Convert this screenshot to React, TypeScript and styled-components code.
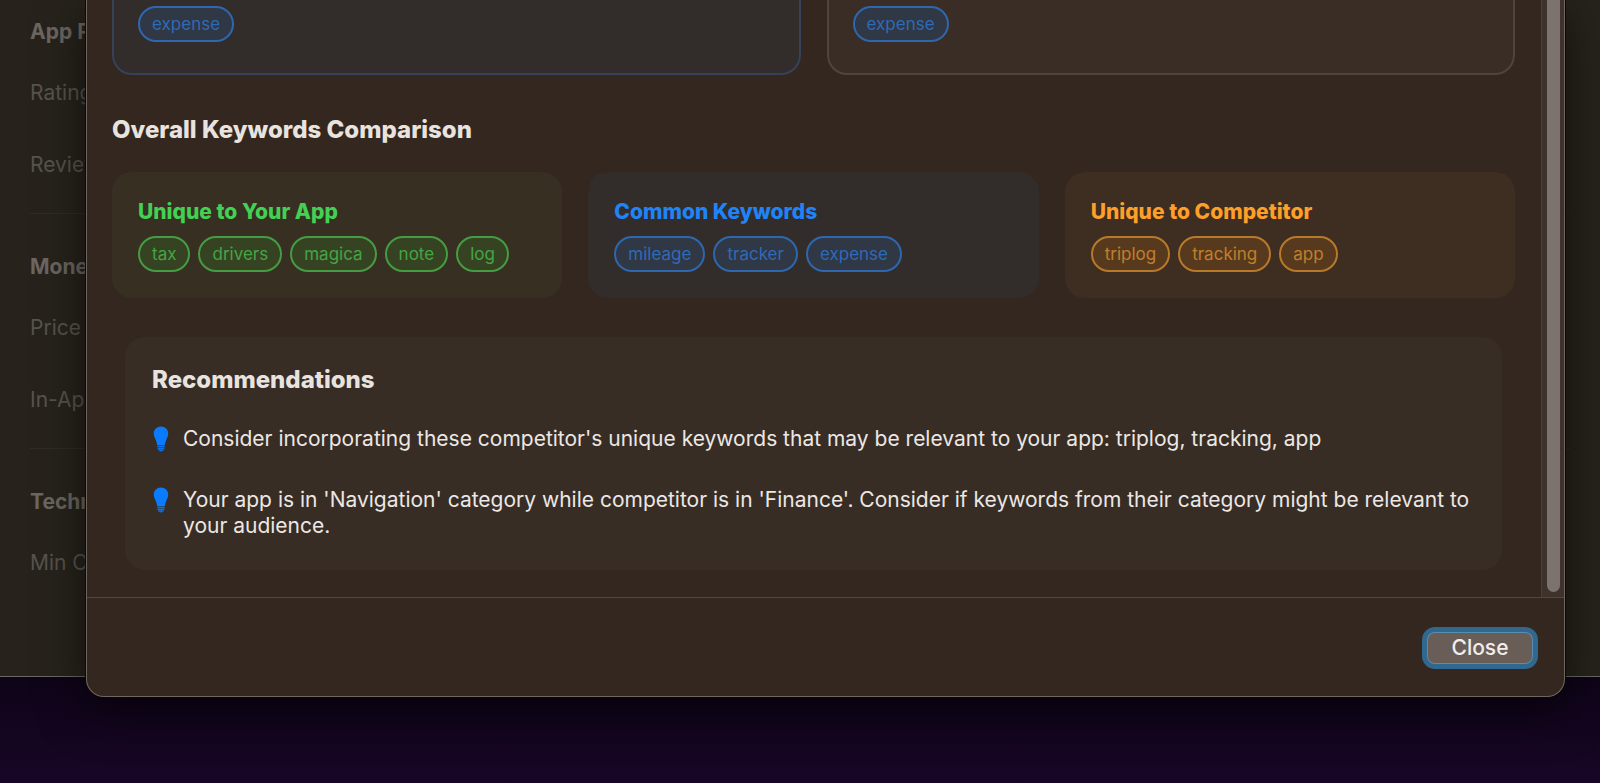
import React from "react";
import styled, { createGlobalStyle } from "styled-components";

const GlobalStyle = createGlobalStyle`
  *, *::before, *::after { box-sizing: border-box; }
  body {
    margin: 0;
    background: #170622;
    font-family: Inter, "Liberation Sans", sans-serif;
    -webkit-font-smoothing: antialiased;
  }
  h2, h3, p, ul { margin: 0; padding: 0; }
  ul { list-style: none; }
`;

type Tone = "green" | "blue" | "orange";

const tones: Record<Tone, { title: string; card: string; chip: string; line: string; text: string }> = {
  green: { title: "#43d153", card: "#382f23", chip: "#364323", line: "#459c42", text: "#44a543" },
  blue: { title: "#1f84f8", card: "#322d2a", chip: "#303745", line: "#2f67ae", text: "#2d6bb8" },
  orange: { title: "#fd9f28", card: "#3e2d21", chip: "#573a1d", line: "#b8792a", text: "#c17f2b" },
};

const Page = styled.div`
  position: relative;
  min-height: 100vh;
  overflow: hidden;
  background: linear-gradient(#0e0418 676px, #180626 783px);
`;

const BackWindow = styled.main`
  padding: 16px 30px 97px;
  background: #27231c;
  border-bottom: 1px solid #6b6865;
`;

const BackGroup = styled.section`
  padding-bottom: 32px;

  & + & {
    padding-top: 37px;
    border-top: 1px solid #302c26;
  }

  &:last-child { padding-bottom: 0; }
`;

const BackTitle = styled.h2`
  margin-bottom: 29px;
  font-size: 21px;
  line-height: 32px;
  font-weight: 700;
  color: #6b6661;
`;

const BackLabel = styled.p`
  font-size: 21px;
  line-height: 32px;
  color: #57534e;

  & + & { margin-top: 40px; }
`;

const Dialog = styled.section`
  position: absolute;
  top: 0;
  left: 86px;
  right: 35px;
  background: #34271f;
  border: 1px solid #6f6660;
  border-top: 0;
  border-radius: 0 0 18px 18px;
  box-shadow: 0 0 0 1px #0b0807, 0 12px 48px rgba(0, 0, 0, 0.6);
`;

const DialogBody = styled.div`
  display: flex;
  border-bottom: 1px solid #52483f;
`;

const Content = styled.div`
  flex: 1;
  min-width: 0;
  padding: 0 26px 27px 25px;
`;

const ScrollTrack = styled.div`
  display: flex;
  width: 23px;
  padding: 0 4px 5px 5px;
  background: #3d332c;
  border-left: 1px solid #4a4039;
`;

const ScrollThumb = styled.div`
  flex: 1;
  border-radius: 0 0 7px 7px;
  background: #7d736e;
`;

const AppRow = styled.div`
  display: grid;
  grid-template-columns: 1fr 1fr;
  gap: 26px;
`;

const AppCard = styled.div<{ $own?: boolean }>`
  padding: 6px 24px 31px;
  border: 2px solid ${(p) => (p.$own ? "#35425a" : "#50453e")};
  border-top: 0;
  border-radius: 0 0 20px 20px;
  background: ${(p) => (p.$own ? "#322d2a" : "#3a2d25")};
`;

const SectionTitle = styled.h2`
  font-size: 24px;
  line-height: 32px;
  font-weight: 800;
  color: #e9e3df;
`;

const CompareTitle = styled(SectionTitle)`
  margin: 39px 0 26px;
`;

const KeywordRow = styled.div`
  display: grid;
  grid-template-columns: repeat(3, 1fr);
  gap: 26px;
`;

const KeywordCard = styled.section<{ $tone: Tone }>`
  padding: 26px;
  border-radius: 20px;
  background: ${(p) => tones[p.$tone].card};
`;

const KeywordTitle = styled.h3<{ $tone: Tone }>`
  margin-bottom: 11px;
  font-size: 21px;
  line-height: 27px;
  font-weight: 800;
  color: ${(p) => tones[p.$tone].title};
`;

const Chips = styled.ul`
  display: flex;
  flex-wrap: wrap;
  gap: 8px;
`;

const Chip = styled.li<{ $tone: Tone }>`
  padding: 0 12px;
  border: 2px solid ${(p) => tones[p.$tone].line};
  border-radius: 18px;
  background: ${(p) => tones[p.$tone].chip};
  font-size: 17px;
  line-height: 32px;
  color: ${(p) => tones[p.$tone].text};
`;

const Recommendations = styled.section`
  margin: 39px 13px 0;
  padding: 27px 27px 31px;
  border-radius: 20px;
  background: #372d25;
`;

const TipList = styled.ul`
  display: flex;
  flex-direction: column;
  gap: 35px;
  margin-top: 30px;
`;

const Tip = styled.li`
  display: flex;
  gap: 12px;
  font-size: 21px;
  line-height: 26px;
  color: #ece7e4;
`;

const Bulb = styled.svg`
  flex: none;
  width: 19px;
  height: 26px;
`;

const Footer = styled.footer`
  display: flex;
  justify-content: flex-end;
  padding: 34px 31px 32px;
`;

const CloseButton = styled.button`
  width: 106px;
  height: 32px;
  padding: 0;
  border: 0;
  border-radius: 8px;
  background: #685d57;
  box-shadow: inset 0 0 0 1px #5c8cab, 0 0 0 5px #31688f;
  font: 500 21px/32px Inter, "Liberation Sans", sans-serif;
  color: #f1edeb;
`;

const backGroups = [
  { title: "App P", rows: ["Rating", "Review"] },
  { title: "Mone", rows: ["Price", "In-App"] },
  { title: "Techn", rows: ["Min O"] },
];

const comparison: { tone: Tone; title: string; words: string[] }[] = [
  { tone: "green", title: "Unique to Your App", words: ["tax", "drivers", "magica", "note", "log"] },
  { tone: "blue", title: "Common Keywords", words: ["mileage", "tracker", "expense"] },
  { tone: "orange", title: "Unique to Competitor", words: ["triplog", "tracking", "app"] },
];

const tips = [
  "Consider incorporating these competitor's unique keywords that may be relevant to your app: triplog, tracking, app",
  "Your app is in 'Navigation' category while competitor is in 'Finance'. Consider if keywords from their category might be relevant to your audience.",
];

function ChipList({ tone, words }: { tone: Tone; words: string[] }) {
  return (
    <Chips>
      {words.map((word) => (
        <Chip key={word} $tone={tone}>{word}</Chip>
      ))}
    </Chips>
  );
}

function LightBulb() {
  return (
    <Bulb viewBox="0 0 19 26" aria-hidden="true">
      <path
        fill="#0a7bff"
        d="M9 .5C4.900.5 1.800 3.500 1.800 7.500c0 2.600 1 4.300 1.900 6.300.8 1.800 1.300 3.600 1.500 5.400h7.600c.2-1.800.7-3.600 1.500-5.400.9-2 1.900-3.700 1.900-6.300 0-4-3.100-7-7.200-7z"
      />
      <path fill="#0a70ea" d="M5.300 19.700h7.400v1.500H5.300zM5.400 21.700h7.200l-.3 1.500H5.700zM6 23.600h6c-.4 1.200-1.500 1.800-3 1.800s-2.600-.6-3-1.800z" />
    </Bulb>
  );
}

export default function App() {
  return (
    <Page>
      <GlobalStyle />
      <BackWindow>
        {backGroups.map((group) => (
          <BackGroup key={group.title}>
            <BackTitle>{group.title}</BackTitle>
            {group.rows.map((row) => (
              <BackLabel key={row}>{row}</BackLabel>
            ))}
          </BackGroup>
        ))}
      </BackWindow>
      <Dialog role="dialog" aria-labelledby="comparison-title">
        <DialogBody>
          <Content>
            <AppRow>
              <AppCard $own>
                <ChipList tone="blue" words={["expense"]} />
              </AppCard>
              <AppCard>
                <ChipList tone="blue" words={["expense"]} />
              </AppCard>
            </AppRow>
            <CompareTitle id="comparison-title">Overall Keywords Comparison</CompareTitle>
            <KeywordRow>
              {comparison.map(({ tone, title, words }) => (
                <KeywordCard key={title} $tone={tone}>
                  <KeywordTitle $tone={tone}>{title}</KeywordTitle>
                  <ChipList tone={tone} words={words} />
                </KeywordCard>
              ))}
            </KeywordRow>
            <Recommendations>
              <SectionTitle>Recommendations</SectionTitle>
              <TipList>
                {tips.map((tip) => (
                  <Tip key={tip}>
                    <LightBulb />
                    <p>{tip}</p>
                  </Tip>
                ))}
              </TipList>
            </Recommendations>
          </Content>
          <ScrollTrack>
            <ScrollThumb />
          </ScrollTrack>
        </DialogBody>
        <Footer>
          <CloseButton type="button">Close</CloseButton>
        </Footer>
      </Dialog>
    </Page>
  );
}
